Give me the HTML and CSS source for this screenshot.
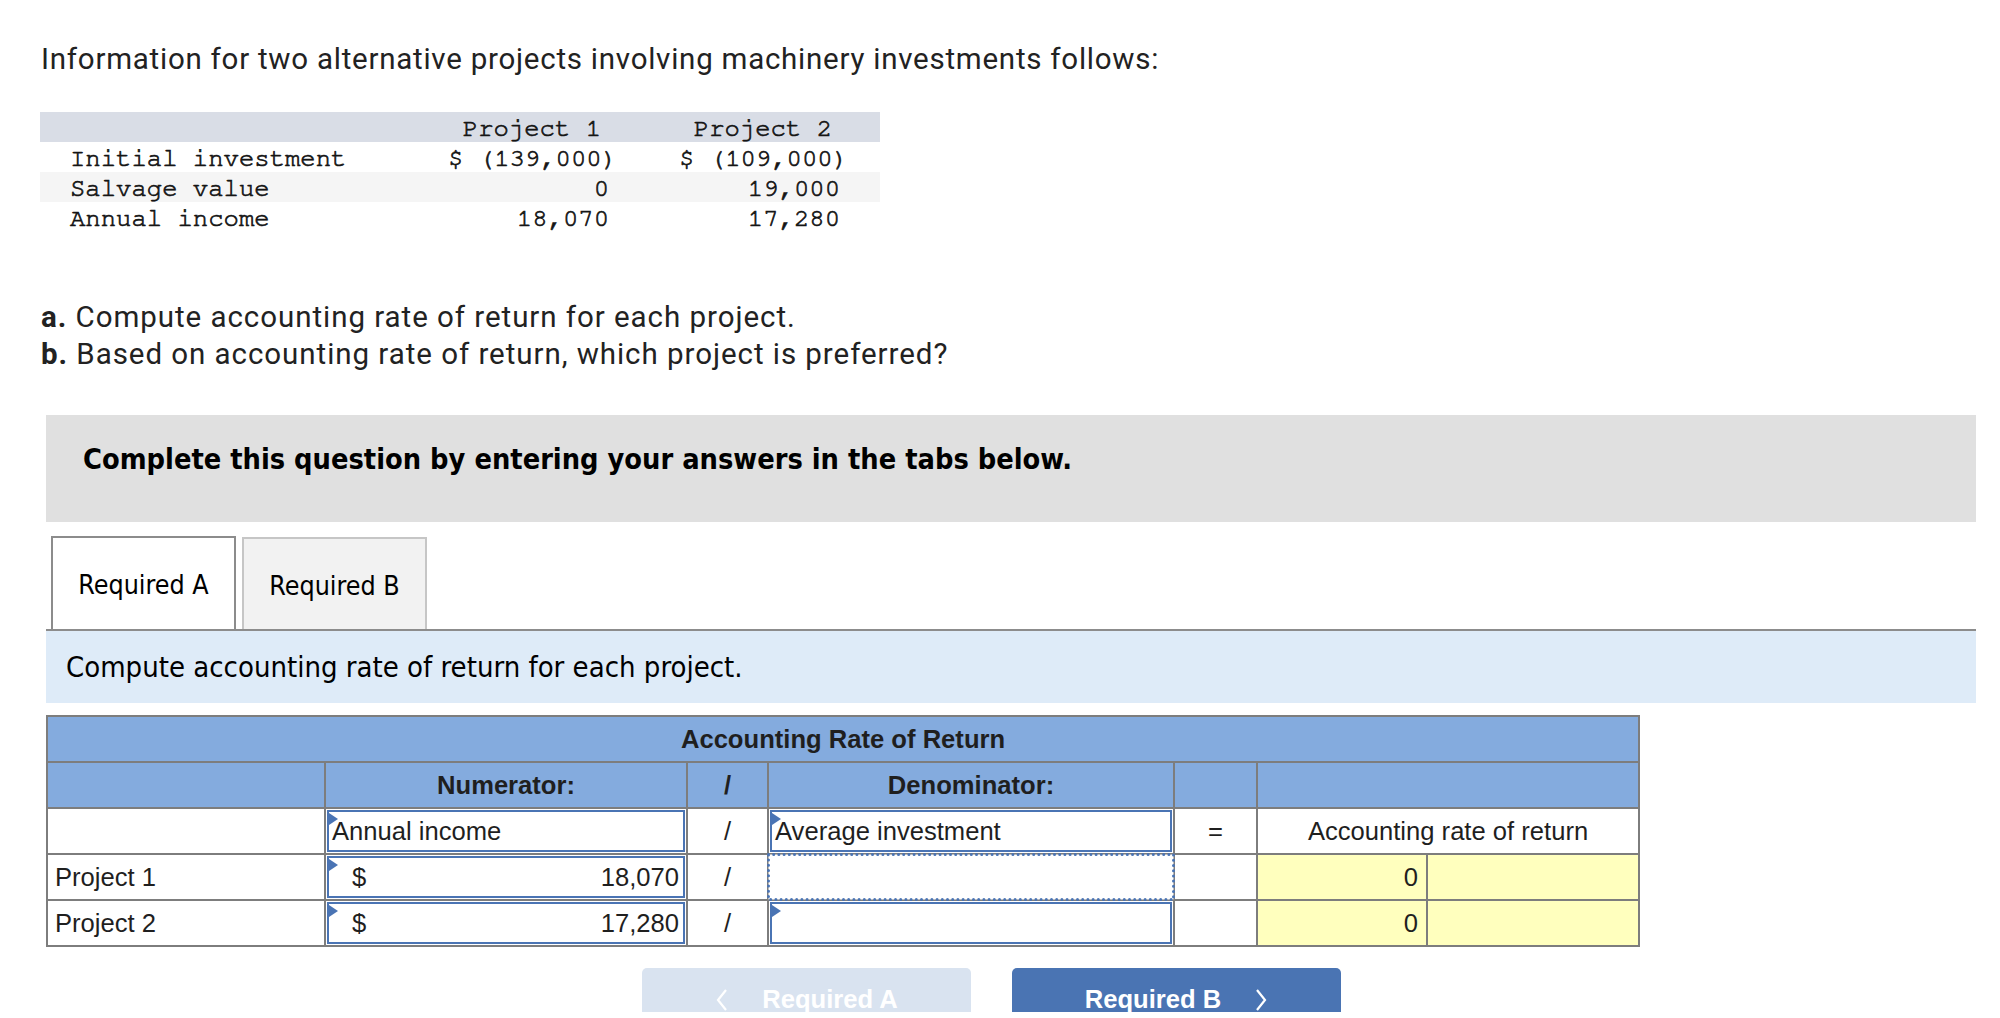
FILE: index.html
```html
<!DOCTYPE html>
<html lang="en">
<head>
<meta charset="utf-8">
<title>Accounting rate of return</title>
<link rel="stylesheet" href="styles.css">
</head>
<body>
<div class="page">
  <p class="intro">Information for two alternative projects involving machinery investments follows:</p>

  <table class="data">
    <colgroup><col class="dc1"><col class="dc2"><col class="dc3"></colgroup>
    <tr class="dhead"><td></td><td class="h1">Project 1</td><td class="h2">Project 2</td></tr>
    <tr><td class="lab">Initial investment</td><td class="v">$ (139,000)</td><td class="v">$ (109,000)</td></tr>
    <tr class="alt"><td class="lab">Salvage value</td><td class="v"><span class="n">0</span></td><td class="v"><span class="n">19,000</span></td></tr>
    <tr><td class="lab">Annual income</td><td class="v"><span class="n">18,070</span></td><td class="v"><span class="n">17,280</span></td></tr>
  </table>

  <div class="questions">
    <p><b>a.</b> Compute accounting rate of return for each project.</p>
    <p><b>b.</b> Based on accounting rate of return, which project is preferred?</p>
  </div>

  <div class="notice">Complete this question by entering your answers in the tabs below.</div>

  <div class="tabs">
    <div class="tab active">Required A</div>
    <div class="tab">Required B</div>
  </div>
  <div class="instr">Compute accounting rate of return for each project.</div>

  <table class="arr">
    <colgroup>
      <col class="w1"><col class="w2"><col class="w3"><col class="w4"><col class="w5"><col class="w6"><col class="w7">
    </colgroup>
    <tr class="hd"><td colspan="7">Accounting Rate of Return</td></tr>
    <tr class="hd"><td></td><td>Numerator:</td><td>/</td><td>Denominator:</td><td></td><td colspan="2"></td></tr>
    <tr>
      <td></td>
      <td class="ic"><div class="inp flag">Annual income</div></td>
      <td class="op">/</td>
      <td class="ic"><div class="inp flag">Average investment</div></td>
      <td class="op">=</td>
      <td colspan="2" class="ctr">Accounting rate of return</td>
    </tr>
    <tr>
      <td class="name">Project 1</td>
      <td class="ic"><div class="inp flag money"><span>$</span><span>18,070</span></div></td>
      <td class="op">/</td>
      <td class="focus"><svg class="ring"><rect class="ring-rect" x="1.5" y="1.5"/></svg></td>
      <td></td>
      <td class="yel num">0</td>
      <td class="yel"></td>
    </tr>
    <tr>
      <td class="name">Project 2</td>
      <td class="ic"><div class="inp flag money"><span>$</span><span>17,280</span></div></td>
      <td class="op">/</td>
      <td class="ic"><div class="inp flag"></div></td>
      <td></td>
      <td class="yel num">0</td>
      <td class="yel"></td>
    </tr>
  </table>

  <div class="nav">
    <div class="btn prev">
      <svg class="chev" width="14" height="22" viewBox="0 0 14 22"><polyline points="11,1 3,11 11,21" fill="none" stroke="#ffffff" stroke-width="2.2"/></svg>
      <span>Required A</span>
    </div>
    <div class="btn next">
      <span>Required B</span>
      <svg class="chev" width="14" height="22" viewBox="0 0 14 22"><polyline points="3,1 11,11 3,21" fill="none" stroke="#ffffff" stroke-width="2.2"/></svg>
    </div>
  </div>
</div>
</body>
</html>
```

FILE: styles.css
```css
html, body {
  margin: 0;
  padding: 0;
  background: #ffffff;
}

.page {
  padding-left: 41px;
  width: 1935px;
  color: #1e1e1e;
}

.intro {
  margin: 0;
  padding-top: 41px;
  font-family: Roboto, Lato, sans-serif;
  font-size: 29.5px;
  letter-spacing: 0.75px;
  line-height: 37px;
  color: #222222;
}

/* mono data table */
.data {
  margin: 34px 0 0 -1px;
  border-collapse: collapse;
  table-layout: fixed;
  width: 840px;
  font-family: "Nimbus Mono PS", "FreeMono", "Liberation Mono", "Courier New", monospace;
  font-size: 25.6px;
  color: #151515;
  -webkit-text-stroke: 0.7px #151515;
}
.dc1 { width: 390px; }
.dc2 { width: 202px; }
.dc3 { width: 248px; }
.data td {
  height: 30px;
  padding: 0;
  line-height: 26px;
  vertical-align: bottom;
  white-space: pre;
}
.dhead td { background: #d9dde6; }
.alt td { background: #f5f5f5; }
.data .lab { padding-left: 30px; }
.data .v { text-align: right; padding-right: 15px; }
.data td:nth-child(3).v { padding-right: 32px; }
.data .n { padding-right: 8px; }
.data .h1 { text-align: right; padding-right: 31px; }
.data .h2 { text-align: right; padding-right: 48px; }

.questions {
  margin-top: 67px;
  font-family: Roboto, Lato, sans-serif;
  font-size: 29.5px;
  letter-spacing: 0.95px;
  line-height: 37px;
  color: #222222;
}
.questions p { margin: 0; }
.questions b { font-weight: 700; }

.notice {
  margin: 42px 0 0 5px;
  height: 107px;
  box-sizing: border-box;
  padding: 26px 0 0 37px;
  background: #e0e0e0;
  font-family: "DejaVu Sans", Tahoma, sans-serif;
  font-stretch: condensed;
  font-weight: bold;
  font-size: 28.7px;
  line-height: 37px;
  color: #000000;
}

.tabs {
  margin: 14px 0 0 5px;
  display: flex;
  align-items: flex-end;
  gap: 6px;
  padding-left: 5px;
  border-bottom: 2px solid #8c8c8c;
  height: 95px;
  box-sizing: border-box;
}
.tab {
  width: 185px;
  height: 92px;
  box-sizing: border-box;
  border: 2px solid #c6c6c6;
  border-bottom: none;
  background: #f2f2f2;
  text-align: center;
  font-family: "DejaVu Sans", Tahoma, sans-serif;
  font-stretch: condensed;
  font-size: 26.6px;
  line-height: 94px;
  color: #000000;
}
.tab.active {
  height: 93px;
  border-color: #8c8c8c;
  background: #ffffff;
}

.instr {
  margin-left: 5px;
  height: 72px;
  padding-left: 20px;
  background: #deebf8;
  font-family: "DejaVu Sans", Tahoma, sans-serif;
  font-stretch: condensed;
  font-size: 29px;
  line-height: 72px;
  color: #000000;
}

/* answer table */
.arr {
  margin: 12px 0 0 5px;
  border-collapse: collapse;
  table-layout: fixed;
  width: 1594px;
  font-family: "Liberation Sans", Arial, sans-serif;
  font-size: 25.6px;
  color: #1f1f1f;
}
.w1 { width: 278px; }
.w2 { width: 362px; }
.w3 { width: 81px; }
.w4 { width: 406px; }
.w5 { width: 83px; }
.w6 { width: 170px; }
.w7 { width: 212px; }

.arr td {
  border: 2px solid #7d7d7d;
  height: 46px;
  padding: 0;
  box-sizing: border-box;
  background: #ffffff;
  line-height: 28px;
  white-space: nowrap;
}
.arr .hd td {
  background: #84abde;
  font-weight: bold;
  text-align: center;
}
.arr .ic { padding: 1px; }
.arr .op { text-align: center; }
.arr .ctr { text-align: center; }
.arr .name { padding-left: 7px; }
.arr .yel { background: #ffffbe; }
.arr .num { text-align: right; padding-right: 8px; }
.arr .focus { position: relative; }

.inp {
  position: relative;
  height: 42px;
  box-sizing: border-box;
  border: 2px solid #4a74b4;
  background: #ffffff;
  padding-left: 3px;
  line-height: 38px;
}
.inp.flag::before {
  content: "";
  position: absolute;
  left: 0;
  top: 1px;
  border-left: 9px solid #4a74b4;
  border-top: 6px solid transparent;
  border-bottom: 6px solid transparent;
}
.inp.money {
  display: flex;
  justify-content: space-between;
  padding: 0 4px 0 23px;
}

.ring {
  position: absolute;
  left: -2px;
  top: -2px;
  width: calc(100% + 4px);
  height: calc(100% + 4px);
  overflow: visible;
}
.ring-rect {
  width: calc(100% - 3px);
  height: calc(100% - 3px);
  fill: #ffffff;
  stroke: #4a74b4;
  stroke-width: 3px;
  stroke-linecap: round;
  stroke-dasharray: 0 5.2;
}

/* nav buttons */
.nav {
  margin: 21px 0 0 601px;
  height: 44px;
  overflow: hidden;
  display: flex;
  gap: 41px;
}
.btn {
  width: 329px;
  height: 63px;
  border-radius: 5px;
  display: flex;
  align-items: center;
  justify-content: center;
  gap: 33px;
  font-family: "Liberation Sans", Arial, sans-serif;
  font-weight: bold;
  font-size: 25.6px;
  color: #ffffff;
}
.btn.prev { background: #d9e3f0; }
.btn.next { background: #4a74b3; }
.chev { display: block; }
```
